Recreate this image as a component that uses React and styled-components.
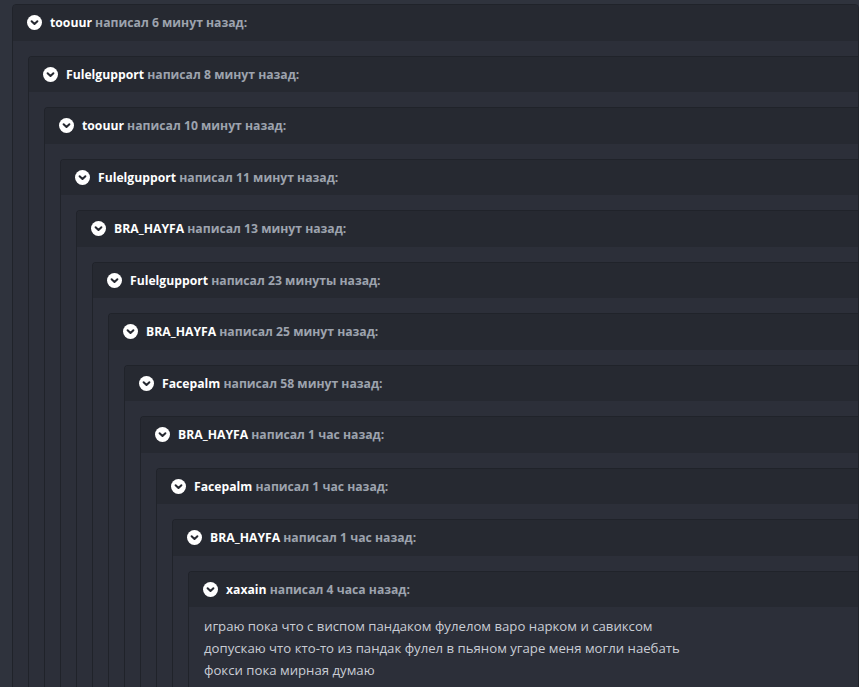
import React from "react";
import styled, { createGlobalStyle } from "styled-components";

const GlobalStyle = createGlobalStyle`
    html, body {
        margin: 0;
        padding: 0;
        overflow: hidden;
        background-color: #2f333d;
        font-family: "Open Sans", "Noto Sans", sans-serif;
    }
    * {
        box-sizing: border-box;
    }
`;

const Page = styled.div`
    padding: 4px 0 0 12px;
`;

/** 댓글 블록 (재귀 중첩) */
const Block = styled.div`
    border: 1px solid #20232a;
    border-right: ${(p) => (p.$root ? "1px solid #20232a" : "none")};
    border-radius: ${(p) => (p.$root ? "4px 4px 0 0" : "4px 0 0 0")};
    background-color: #2c2f39;
    overflow: hidden;
`;

const Header = styled.div`
    height: 35.5px;
    display: flex;
    align-items: center;
    gap: 8px;
    padding-left: 14px;
    background-color: #262931;
    font-size: 12.2px;
    font-weight: 700;
    white-space: nowrap;
`;

const Name = styled.span`
    color: #ffffff;
`;

const Meta = styled.span`
    color: #9da3ae;
`;

const Body = styled.div`
    padding: ${(p) => (p.$text ? "8px 15px 40px 15px" : "15px 0 16px 15px")};
`;

const Line = styled.p`
    margin: 0;
    font-size: 13.2px;
    line-height: 22px;
    color: #c9cdd5;
    white-space: nowrap;
`;

const Toggle = () => (
    <svg width="15" height="15" viewBox="0 0 15 15">
        <circle cx="7.5" cy="7.5" r="7.5" fill="#ffffff" />
        <polyline
            points="4.6,6.2 7.5,9 10.4,6.2"
            fill="none"
            stroke="#262931"
            strokeWidth="2"
            strokeLinecap="round"
            strokeLinejoin="round"
        />
    </svg>
);

const thread = [
    ["toouur", "6 минут назад"],
    ["Fulelgupport", "8 минут назад"],
    ["toouur", "10 минут назад"],
    ["Fulelgupport", "11 минут назад"],
    ["BRA_HAYFA", "13 минут назад"],
    ["Fulelgupport", "23 минуты назад"],
    ["BRA_HAYFA", "25 минут назад"],
    ["Facepalm", "58 минут назад"],
    ["BRA_HAYFA", "1 час назад"],
    ["Facepalm", "1 час назад"],
    ["BRA_HAYFA", "1 час назад"],
    ["xaxain", "4 часа назад"],
];

const lastText = [
    "играю пока что с виспом пандаком фулелом варо нарком и савиксом",
    "допускаю что кто-то из пандак фулел в пьяном угаре меня могли наебать",
    "фокси пока мирная думаю",
];

const Comment = ({ level }) => {
    const [name, time] = thread[level];
    const isLast = level === thread.length - 1;
    return (
        <Block $root={level === 0}>
            <Header>
                <Toggle />
                <span>
                    <Name>{name}</Name> <Meta>написал {time}:</Meta>
                </span>
            </Header>
            <Body $text={isLast}>
                {isLast ? lastText.map((t) => <Line key={t}>{t}</Line>) : <Comment level={level + 1} />}
            </Body>
        </Block>
    );
};

const App = () => {
    return (
        <>
            <GlobalStyle />
            <Page>
                <Comment level={0} />
            </Page>
        </>
    );
};

export default App;
